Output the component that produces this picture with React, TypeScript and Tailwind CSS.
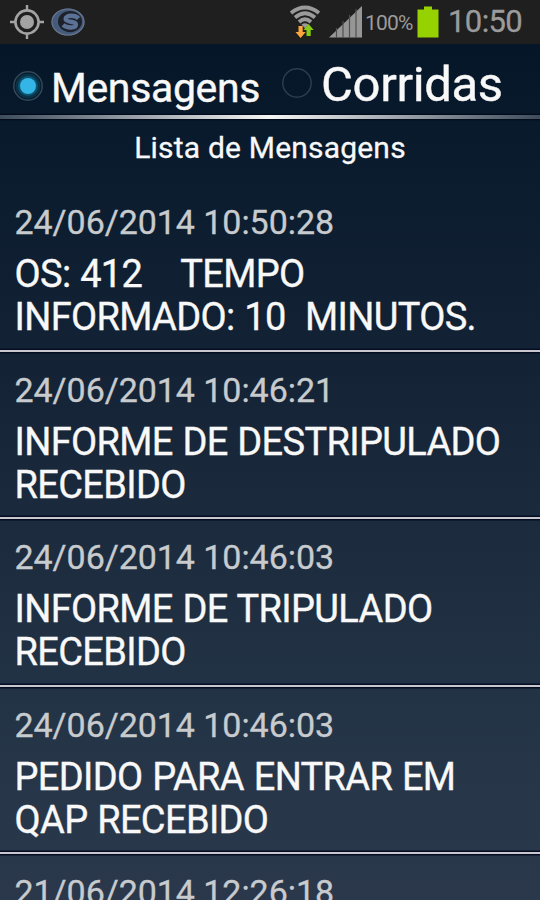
const messages = [
  { id: 1, date: "24/06/2014 10:50:28", lines: ["OS: 412    TEMPO", "INFORMADO: 10  MINUTOS."] },
  { id: 2, date: "24/06/2014 10:46:21", lines: ["INFORME DE DESTRIPULADO", "RECEBIDO"] },
  { id: 3, date: "24/06/2014 10:46:03", lines: ["INFORME DE TRIPULADO", "RECEBIDO"] },
  { id: 4, date: "24/06/2014 10:46:03", lines: ["PEDIDO PARA ENTRAR EM", "QAP RECEBIDO"] },
  { id: 5, date: "21/06/2014 12:26:18", lines: [] },
];

function GpsIcon() {
  return (
    <svg className="h-[36px] w-[36px]" viewBox="0 0 36 36" fill="none">
      <circle cx="18" cy="18" r="11.6" stroke="#a3a3a3" strokeWidth="2.6" />
      <circle cx="18" cy="18" r="7" fill="#a3a3a3" />
      <path d="M18 1v6M18 29v6M1 18h6M29 18h6" stroke="#a3a3a3" strokeWidth="2.4" />
    </svg>
  );
}

function AppLogo() {
  return (
    <svg className="h-[28px] w-[34px]" viewBox="0 0 34 28" fill="none">
      <ellipse cx="17" cy="14" rx="16.5" ry="13.5" fill="#465a7b" />
      <ellipse cx="17" cy="14" rx="16" ry="13" stroke="#66748b" strokeWidth="1.2" />
      <ellipse cx="19" cy="13.6" rx="12" ry="10.6" fill="#1d2129" />
      <path
        d="M27.5 10.5C24.5 7 14.5 6.6 14.6 11C14.8 15 25 12.4 24.9 16.6C24.6 20.8 15.500 20 12 16.8"
        stroke="#5c7196"
        strokeWidth="4.4"
      />
    </svg>
  );
}

function WifiIcon() {
  return (
    <svg className="h-[34px] w-[32px]" viewBox="0 0 32 34" fill="none">
      <path d="M2 8Q16 -3 30 8" stroke="#9a9a9a" strokeWidth="3.8" />
      <path d="M6 12.5Q16 4 26 12.5" stroke="#9a9a9a" strokeWidth="3.8" />
      <path d="M10 17Q16 11.5 22 17" stroke="#9a9a9a" strokeWidth="3.8" />
      <path d="M12.5 19.5Q16 16.8 19.5 19.5L16 23.5Z" fill="#9a9a9a" />
      <path d="M9.5 21h4.200v6h3L11.6 33L6.500 27h3Z" fill="#ffa53c" />
      <path d="M17.5 31h4.200v-6h3L19.6 19L14.5 25h3Z" fill="#86cc16" />
    </svg>
  );
}

function SignalIcon() {
  return (
    <svg className="h-[32px] w-[34px]" viewBox="0 0 34 32">
      <path d="M0 31.5L33 0V31.5Z" fill="#969696" />
      <path d="M7.5 22v10M14 15v17M20.5 9v23M27 3v29" stroke="#505050" strokeWidth="1.2" />
    </svg>
  );
}

function BatteryIcon() {
  return (
    <svg className="h-[32px] w-[22px]" viewBox="0 0 22 32">
      <path d="M7 .5h8v3h6.5v28H.5V3.5H7Z" fill="#95d200" />
    </svg>
  );
}

function StatusBar() {
  return (
    <div className="flex h-[44px] shrink-0 items-center bg-[#1f1f1f] pl-[9px] text-[#9b9b9b]">
      <GpsIcon />
      <div className="ml-[6px]">
        <AppLogo />
      </div>
      <div className="ml-auto flex items-center pr-[18px]">
        <WifiIcon />
        <div className="ml-[8px]">
          <SignalIcon />
        </div>
        <span className="mt-[2px] ml-[2px] w-[49px] text-[21px] leading-[44px] tracking-[-0.8px] whitespace-nowrap">100%</span>
        <div className="ml-[3px]">
          <BatteryIcon />
        </div>
        <span className="ml-[9px] w-[74px] text-[31px] leading-[44px] tracking-[-0.6px] whitespace-nowrap [-webkit-text-stroke:0.3px]">10:50</span>
      </div>
    </div>
  );
}

function Radio({ checked }: { checked?: boolean }) {
  return (
    <svg className="h-[32px] w-[32px]" viewBox="0 0 32 32" fill="none">
      {checked && <circle cx="16" cy="16" r="12.5" fill="#0a3348" />}
      {checked && <circle cx="16" cy="16" r="10" fill="#0f5270" />}
      <circle cx="16" cy="16" r="14.2" stroke={checked ? "#31485a" : "#2c3d4c"} strokeWidth="1.5" />
      {checked && <circle cx="16" cy="16" r="8" fill="#33b5e5" />}
    </svg>
  );
}

export default function App() {
  return (
    <div className="flex h-[900px] w-[540px] flex-col overflow-hidden bg-[linear-gradient(to_bottom,#041627_5%,#0b1c2e_20%,#132335_40%,#1c2c3e_60%,#243447_80%,#2b384b_100%)] font-['Roboto','Noto_Sans',sans-serif] text-[#f8f8f8]">
      <StatusBar />

      {/* Abas */}
      <div className="flex h-[71px] shrink-0 items-start pl-[12px] [-webkit-text-stroke:0.4px]">
        <div className="mt-[26px]">
          <Radio checked />
        </div>
        <span className="ml-[7px] mt-[18px] w-[215px] text-[41px] leading-[52px] tracking-[-0.35px] whitespace-nowrap">Mensagens</span>
        <div className="mt-[23px] ml-[15px]">
          <Radio />
        </div>
        <span className="ml-[8px] mt-[12px] text-[49px] leading-[58px] tracking-[-0.35px] whitespace-nowrap">Corridas</span>
      </div>
      <div className="h-[4px] shrink-0 bg-[linear-gradient(to_right,#3d4b5b,#f5f5f5_50%,#3d4b5b)] shadow-[0_0_1px_1px_#020b1a]" />

      <h1 className="h-[65px] shrink-0 pt-[11px] text-center text-[30px] leading-[36px] tracking-[0.2px] [-webkit-text-stroke:0.3px]">
        Lista de Mensagens
      </h1>

      {/* Lista */}
      {messages.map((m) => (
        <div key={m.id} className="flex h-[167.5px] shrink-0 flex-col">
          <div className="flex-1 pt-[18px] pl-[14.5px]">
            <div className="text-[34px] leading-[40px] tracking-[-0.05px] whitespace-pre text-[#c8cbce] [-webkit-text-stroke:0.3px]">{m.date}</div>
            <div className="mt-[11px] text-[38px] leading-[43px] tracking-[-0.65px] [word-spacing:0.9px] whitespace-pre [-webkit-text-stroke:0.35px]">
              {m.lines.map((line) => (
                <div key={line}>{line}</div>
              ))}
            </div>
          </div>
          <div className="h-[2px] bg-[#c9c6cd] shadow-[0_0_0_1.5px_#050d22]" />
        </div>
      ))}
    </div>
  );
}
